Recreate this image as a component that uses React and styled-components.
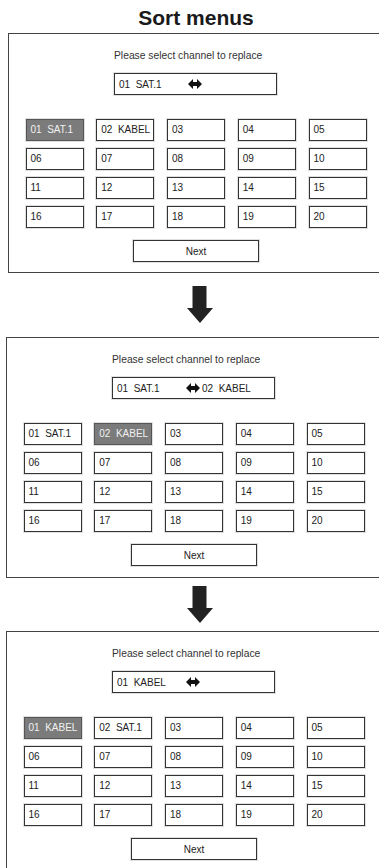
import React from "react";
import styled, { createGlobalStyle } from "styled-components";

const GlobalStyle = createGlobalStyle`
  body {
    margin: 0;
    background: #fff;
    overflow: hidden;
    font-family: "Liberation Sans", Arial, sans-serif;
    color: #222;
  }
`;

const Page = styled.div`
  width: 392px;
`;

const Title = styled.h1`
  margin: 0;
  padding-top: 3px;
  height: 30px;
  line-height: 30px;
  font-size: 21px;
  font-weight: 700;
  text-align: center;
  color: #1a1a1a;
`;

const Frame = styled.section`
  box-sizing: border-box;
  width: 376px;
  height: ${(p) => p.$h}px;
  margin-left: ${(p) => p.$left}px;
  border: 1px solid #444;
  padding: 15px 0 10px;
  display: flex;
  flex-direction: column;
  align-items: center;
`;

const Header = styled.div`
  width: 163px;
  margin-right: 1px;
`;

const Prompt = styled.div`
  height: 14px;
  line-height: 14px;
  font-size: 10.3px;
  color: #333;
  white-space: nowrap;
`;

const Field = styled.div`
  box-sizing: border-box;
  margin-top: 10px;
  width: 163px;
  height: 22px;
  border: 1px solid #333;
  box-shadow: 0 0 0 1px rgba(0, 0, 0, 0.12);
  padding-left: 4px;
  display: flex;
  align-items: center;
  font-size: 10px;
  white-space: pre;
`;

const FieldLabel = styled.span`
  width: 69px;
`;

const Swap = styled.svg`
  width: 14px;
  height: 10px;
  margin-right: 2px;
`;

const Grid = styled.div`
  margin-top: 24px;
  display: grid;
  grid-template-columns: repeat(5, 58px);
  grid-auto-rows: 22px;
  column-gap: 12.75px;
  row-gap: 7px;
`;

const Cell = styled.div`
  box-sizing: border-box;
  border: 1px solid ${(p) => (p.$active ? "#555" : "#333")};
  box-shadow: 0 0 0 1px rgba(0, 0, 0, 0.12);
  background: ${(p) => (p.$active ? "#7b7b7b" : "#fff")};
  color: ${(p) => (p.$active ? "#f2f2f2" : "#222")};
  padding-left: 4px;
  line-height: 20px;
  font-size: 10px;
  white-space: pre;
  overflow: hidden;
`;

const NextButton = styled.button`
  box-sizing: border-box;
  margin-top: 12px;
  width: 126px;
  height: 22px;
  border: 1px solid #333;
  box-shadow: 0 0 0 1px rgba(0, 0, 0, 0.12);
  background: #fff;
  font-family: inherit;
  font-size: 10px;
  color: #222;
  padding: 0;
`;

const ArrowRow = styled.div`
  height: ${(p) => p.$h}px;
  padding-top: ${(p) => p.$top}px;
  box-sizing: border-box;
  display: flex;
  justify-content: center;
  padding-left: 7px;
`;

const SwapIcon = () => (
  <Swap viewBox="0 0 14 10">
    <polygon points="0,5 5,0 5,3 9,3 9,0 14,5 9,10 9,7 5,7 5,10" fill="#111" />
  </Swap>
);

const DownArrow = () => (
  <svg width="26" height="37" viewBox="0 0 26 37">
    <polygon points="5.5,0 19.5,0 19.5,22 26,22 13,37 0,22 5.5,22" fill="#222" />
  </svg>
);

const Screen = ({ left, height, from, to, cells, active }) => {
  const list = Array.from({ length: 20 }, (_, i) =>
    cells[i] || String(i + 1).padStart(2, "0")
  );
  return (
    <Frame $left={left} $h={height}>
      <Header>
        <Prompt>Please select channel to replace</Prompt>
        <Field>
          <FieldLabel>{from}</FieldLabel>
          <SwapIcon />
          {to && <span>{to}</span>}
        </Field>
      </Header>
      <Grid>
        {list.map((c, i) => (
          <Cell key={i} $active={i === active}>
            {c}
          </Cell>
        ))}
      </Grid>
      <NextButton>Next</NextButton>
    </Frame>
  );
};

export default function App() {
  return (
    <Page>
      <GlobalStyle />
      <Title>Sort menus</Title>
      <Screen
        left={8}
        height={240}
        from="01  SAT.1"
        cells={["01  SAT.1", "02  KABEL"]}
        active={0}
      />
      <ArrowRow $h={64} $top={13}>
        <DownArrow />
      </ArrowRow>
      <Screen
        left={6}
        height={241}
        from="01  SAT.1"
        to="02  KABEL"
        cells={["01  SAT.1", "02  KABEL"]}
        active={1}
      />
      <ArrowRow $h={53} $top={8}>
        <DownArrow />
      </ArrowRow>
      <Screen
        left={6}
        height={260}
        from="01  KABEL"
        cells={["01  KABEL", "02  SAT.1"]}
        active={0}
      />
    </Page>
  );
}
